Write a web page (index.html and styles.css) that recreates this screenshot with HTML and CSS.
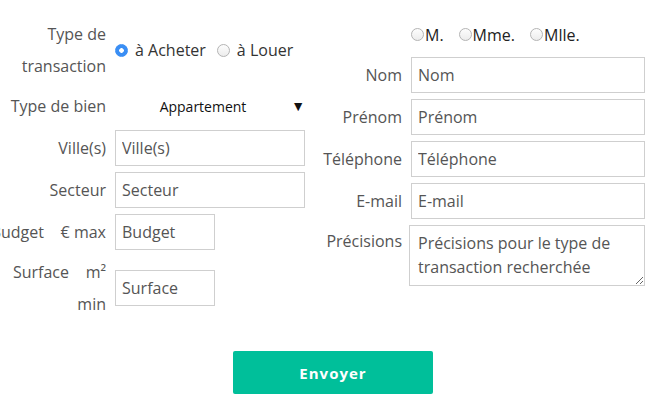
FILE: index.html
```html
<!DOCTYPE html>
<html>
<head>
    <title>Recherche de bien</title>
    <link rel="stylesheet" href="styles.css">
</head>
<body>
    <form class="form">
        <div class="columns">
            <div class="col col-left">
                <label class="label label-wrap">Type de transaction</label>
                <div class="choices">
                    <label class="choice"><input type="radio" name="transaction" checked> à Acheter</label>
                    <label class="choice"><input type="radio" name="transaction"> à Louer</label>
                </div>

                <label class="label">Type de bien</label>
                <div class="select-wrap">
                    <select class="select">
                        <option>Appartement</option>
                        <option>Maison</option>
                        <option>Terrain</option>
                    </select>
                    <span class="select-arrow">▼</span>
                </div>

                <label class="label">Ville(s)</label>
                <input class="field" type="text" placeholder="Ville(s)">

                <label class="label">Secteur</label>
                <input class="field" type="text" placeholder="Secteur">

                <label class="label label-nowrap"><span>Budget&nbsp;&nbsp;&nbsp;&nbsp;€ max</span></label>
                <input class="field field-short" type="text" placeholder="Budget">

                <label class="label label-wrap">Surface&nbsp;&nbsp;&nbsp;&nbsp;m² min</label>
                <input class="field field-short" type="text" placeholder="Surface">
            </div>

            <div class="col col-right">
                <div class="civility">
                    <label class="civ"><input type="radio" name="civ">M.</label>
                    <label class="civ"><input type="radio" name="civ">Mme.</label>
                    <label class="civ"><input type="radio" name="civ">Mlle.</label>
                </div>

                <label class="label">Nom</label>
                <input class="field" type="text" placeholder="Nom">

                <label class="label">Prénom</label>
                <input class="field" type="text" placeholder="Prénom">

                <label class="label">Téléphone</label>
                <input class="field" type="text" placeholder="Téléphone">

                <label class="label">E-mail</label>
                <input class="field" type="text" placeholder="E-mail">

                <label class="label label-top">Précisions</label>
                <textarea class="area" placeholder="Précisions pour le type de transaction recherchée"></textarea>
            </div>
        </div>

        <button type="button" class="submit">Envoyer</button>
    </form>
</body>
</html>
```

FILE: styles.css
```css
body {
    margin: 0;
    font-family: "Open Sans", Arial, sans-serif;
    background: #fff;
    color: #555;
}
.form {
    padding-top: 18px;
}
.columns {
    display: flex;
    align-items: flex-start;
    gap: 10px;
}
.col {
    display: grid;
    column-gap: 9px;
    row-gap: 6px;
    align-items: center;
    align-content: start;
}
.col-left {
    grid-template-columns: 106px 190px;
}
.col-right {
    grid-template-columns: 87px 234px;
}
.label {
    font-size: 16px;
    line-height: 32px;
    text-align: right;
    color: #555;
}
.label-nowrap {
    display: flex;
    justify-content: flex-end;
    white-space: nowrap;
}
.label-top {
    align-self: start;
}
.choices {
    display: flex;
    align-items: center;
    gap: 11px;
}
.choice {
    display: flex;
    align-items: center;
    gap: 7px;
    font-size: 16px;
    color: #333;
}
input[type="radio"] {
    appearance: none;
    -webkit-appearance: none;
    width: 13px;
    height: 13px;
    margin: 0;
    border: 1px solid #b4b4b4;
    border-radius: 50%;
    background: linear-gradient(#fdfdfd, #ececec);
}
input[type="radio"]:checked {
    border-color: #3a8ef4;
    background: radial-gradient(circle, #fff 0 2px, #3a8ef4 2.6px);
}
.select-wrap {
    position: relative;
    height: 36px;
}
.select {
    appearance: none;
    -webkit-appearance: none;
    width: 100%;
    height: 36px;
    border: none;
    background: transparent;
    font-family: "Open Sans", Arial, sans-serif;
    font-size: 14px;
    color: #111;
    text-align: center;
    text-align-last: center;
    padding: 0 14px 0 0;
}
.select-arrow {
    position: absolute;
    right: 0;
    top: 8px;
    font-size: 14px;
    color: #111;
    pointer-events: none;
}
.field {
    box-sizing: border-box;
    height: 36px;
    width: 100%;
    border: 1px solid #cfcfcf;
    padding: 0 6px;
    font-family: "Open Sans", Arial, sans-serif;
    font-size: 16px;
    color: #555;
    background: #fff;
}
.field::placeholder,
.area::placeholder {
    color: #555;
    opacity: 1;
}
.field-short {
    width: 100px;
}
.civility {
    grid-column: 2;
    display: flex;
    align-items: center;
    gap: 15px;
    height: 33px;
}
.civ {
    display: flex;
    align-items: center;
    gap: 1px;
    font-size: 16px;
    color: #222;
}
.area {
    box-sizing: border-box;
    width: calc(100% + 2px);
    margin-left: -2px;
    height: 61px;
    border: 1px solid #cfcfcf;
    padding: 5px 8px;
    font-family: "Open Sans", Arial, sans-serif;
    font-size: 16px;
    line-height: 24px;
    color: #555;
    resize: both;
}
.submit {
    display: block;
    margin: 31px 0 0 233px;
    width: 200px;
    height: 43px;
    border: none;
    border-radius: 2px;
    background: #00bf9a;
    color: #fff;
    font-family: "Open Sans", Arial, sans-serif;
    font-size: 15px;
    font-weight: 700;
    letter-spacing: 1px;
    cursor: pointer;
}
```
